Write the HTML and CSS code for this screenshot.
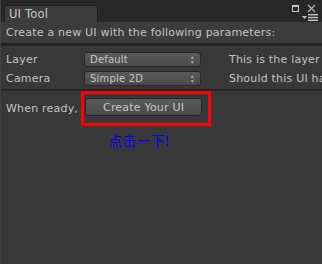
FILE: index.html
```html
<!DOCTYPE html>
<html lang="en">
  <head>
    <meta charset="UTF-8" />
    <title>UI Tool</title>
    <link rel="stylesheet" href="styles.css">
  </head>
  <body>
    <div class="window">
      <div class="titlebar">
        <div class="tab">UI Tool</div>
        <div class="win-icons">
          <svg class="ico-max" width="7" height="7" viewBox="0 0 7 7"><rect x="0.5" y="0.5" width="6" height="6" fill="none" stroke="#c8c8c8" stroke-width="1"/><rect x="0" y="0" width="7" height="2" fill="#c8c8c8"/></svg>
          <svg class="ico-close" width="9" height="9" viewBox="0 0 9 9"><path d="M1 1L8 8M8 1L1 8" stroke="#b4b4b4" stroke-width="1.2"/></svg>
        </div>
        <svg class="ico-menu" width="16" height="7" viewBox="0 0 16 7"><path d="M0 2h5L2.5 5z" fill="#c8c8c8"/><rect x="6" y="0" width="10" height="1.4" fill="#c8c8c8"/><rect x="6" y="2.8" width="10" height="1.4" fill="#c8c8c8"/><rect x="6" y="5.6" width="10" height="1.4" fill="#c8c8c8"/></svg>
      </div>
      <div class="intro">Create a new UI with the following parameters:</div>
      <div class="settings">
        <div class="row">
          <span class="label">Layer</span>
          <div class="popup"><span class="value">Default</span><span class="arrows">&#9652;<br>&#9662;</span></div>
          <span class="hint">This is the layer your UI will go to</span>
        </div>
        <div class="row">
          <span class="label">Camera</span>
          <div class="popup"><span class="value">Simple 2D</span><span class="arrows">&#9652;<br>&#9662;</span></div>
          <span class="hint">Should this UI have a camera?</span>
        </div>
      </div>
      <div class="actions">
        <div class="ready">
          <span class="label">When ready,</span>
          <div class="highlight"><button class="btn">Create Your UI</button></div>
        </div>
        <div class="note">点击一下!</div>
      </div>
    </div>
  </body>
</html>
```

FILE: styles.css
```css
* {
  margin: 0;
  padding: 0;
  box-sizing: border-box;
}
body {
  width: 322px;
  height: 264px;
  overflow: hidden;
  background-color: #383838;
  font-family: "DejaVu Sans", sans-serif;
  font-size: 11px;
  letter-spacing: 0.2px;
  color: #c4c4c4;
}
.window {
  height: 264px;
  border-left: 1px solid #434343;
  overflow: hidden;
}
.titlebar {
  height: 22px;
  background-color: #282828;
  position: relative;
  padding: 5px 0 0 3px;
}
.tab {
  width: 94px;
  height: 17px;
  background-color: #3c3c3c;
  border: 1px solid #1e1e1e;
  border-bottom: none;
  border-radius: 3px 3px 0 0;
  padding: 1px 0 0 4px;
  font-size: 11.5px;
  color: #c8c8c8;
}
.win-icons {
  position: absolute;
  top: 4px;
  right: 6px;
  display: flex;
  gap: 8px;
  align-items: center;
}
.ico-menu {
  position: absolute;
  top: 14px;
  right: 4px;
}
.intro {
  height: 24px;
  background-color: #3c3c3c;
  padding: 4px 0 0 5px;
  border-bottom: 3px solid #232323;
  white-space: nowrap;
}
.settings {
  padding: 5px 0 3px 5px;
  display: flex;
  flex-direction: column;
  gap: 3px;
  border-bottom: 2px solid #252525;
}
.row {
  display: flex;
  align-items: center;
  height: 16px;
  white-space: nowrap;
}
.row .label {
  width: 78px;
  flex-shrink: 0;
}
.popup {
  width: 117px;
  height: 15px;
  flex-shrink: 0;
  display: flex;
  justify-content: space-between;
  border: 1px solid #272727;
  border-radius: 3px;
  background: linear-gradient(#5a5a5a, #4a4a4a);
  font-size: 10px;
  color: #c8c8c8;
  padding: 0 6px 0 5px;
  line-height: 13px;
}
.arrows {
  padding-top: 1px;
  font-size: 6px;
  line-height: 5px;
  color: #a8a8a8;
}
.hint {
  margin-left: 28px;
  flex-shrink: 0;
}
.actions {
  padding: 0 0 0 5px;
}
.ready {
  display: flex;
  align-items: center;
}
.highlight {
  margin-left: 3px;
  border: 3px solid #ff0000;
  padding: 4px 6px 7px 1px;
}
.btn {
  display: block;
  width: 117px;
  height: 18px;
  border: 1px solid #262626;
  border-radius: 3px;
  background: linear-gradient(#5c5c5c, #484848);
  font-family: "DejaVu Sans", sans-serif;
  font-size: 11px;
  letter-spacing: 0.2px;
  color: #c8c8c8;
}
.note {
  margin: 5px 0 0 102px;
  color: #0000ff;
  font-family: "Noto Sans CJK SC", sans-serif;
  font-size: 14px;
  line-height: 18px;
}
```
